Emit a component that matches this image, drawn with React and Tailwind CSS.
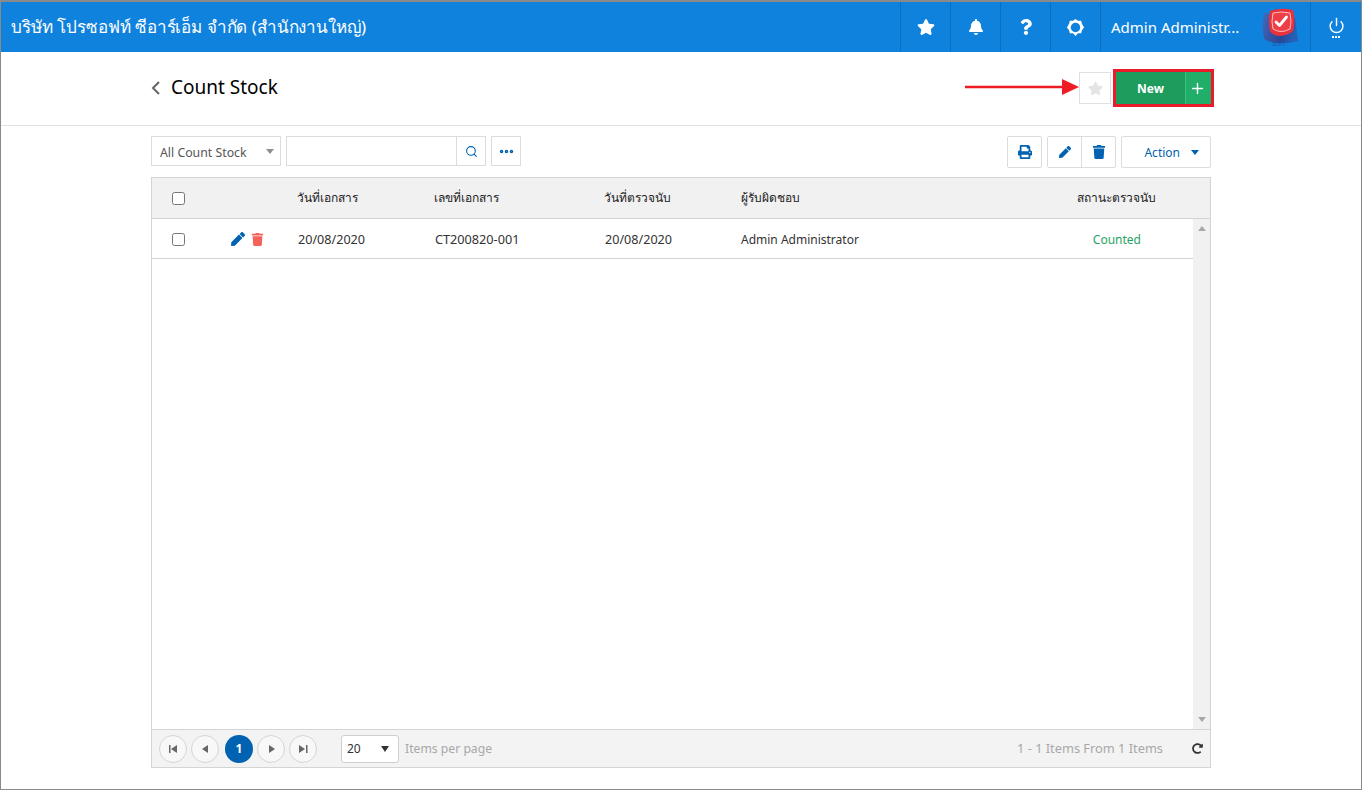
import React from 'react';
import { Search, MoreHorizontal, Plus, Power } from 'lucide-react';
import { FaStar, FaBell, FaQuestion, FaPrint, FaPen, FaTrash, FaRedoAlt } from 'react-icons/fa';

const sans = "font-['Noto_Sans','Liberation_Sans',sans-serif]";

function Gear() {
  return (
    <svg width="19" height="19" viewBox="0 0 20 20">
      <path d="M10 1l2.600 2 3.300-.1.9 3.200L19 10l-2.200 2.900-.9 3.200-3.300-.1L10 19l-2.600-3-3.300.1-.9-3.200L1 10l2.200-3.900.9-3.200 3.300.1z" fill="#fff" />
      <circle cx="10" cy="10" r="5" fill="#0f82de" />
    </svg>
  );
}

function Logo() {
  return (
    <svg width="38" height="40" viewBox="0 0 38 40">
      <defs>
        <linearGradient id="logoBlue" x1="0" y1="0" x2="1" y2="0.300">
          <stop offset="0" stopColor="#4468b8" />
          <stop offset="0.700" stopColor="#2a4796" />
          <stop offset="1" stopColor="#2560b4" />
        </linearGradient>
      </defs>
      <path d="M3 5 Q0 24 4 32 Q18 38 37 33 L34 10z" fill="url(#logoBlue)" />
      <path d="M9 3 Q20 -1 32 2 Q35 14 32 23 Q28 27 20 28 Q12 28 9 23 Q7 12 9 3z" fill="#e8323c" />
      <path d="M12 5 Q20 3 29 5 Q31 14 29 21 Q20 26 12 21 Q10 14 12 5z" fill="#ee3f46" stroke="#ffc0c2" strokeWidth="1" />
      <path d="M15 14l3.500 3.500 7-8.500" stroke="#fff" strokeWidth="2.800" fill="none" strokeLinecap="round" strokeLinejoin="round" />
      <text x="11" y="38" fontSize="5" fill="#24509e" fontFamily="Liberation Sans, sans-serif">SOFT</text>
    </svg>
  );
}

function TopIcon({ children }) {
  return <div className="w-[50px] h-full flex items-center justify-center border-l border-[#0b6fc0]">{children}</div>;
}

function PageBtn({ children }) {
  return <button className="w-7 h-7 rounded-full border border-[#d5d5d5] bg-[#f8f8f8] flex items-center justify-center">{children}</button>;
}

function Tri({ dir }) {
  return dir === 'left'
    ? <svg width="7" height="8" viewBox="0 0 7 8"><path d="M6 0v8L0 4z" fill="#666" /></svg>
    : <svg width="7" height="8" viewBox="0 0 7 8"><path d="M1 0v8l6-4z" fill="#666" /></svg>;
}

export default function App() {
  return (
    <div className={`w-[1362px] h-[790px] flex flex-col border border-t-2 border-[#8a8a8a] bg-white overflow-hidden ${sans}`}>
      {/* top bar */}
      <header className="h-[50px] bg-[#0f82de] flex items-center text-white shrink-0 -ml-px">
        <div className="flex-1 pl-[11px] text-[17px] tracking-[-0.08px]">บริษัท โปรซอฟท์ ซีอาร์เอ็ม จำกัด (สำนักงานใหญ่)</div>
        <TopIcon><FaStar size={18} /></TopIcon>
        <TopIcon><FaBell size={16} /></TopIcon>
        <TopIcon><FaQuestion size={16} /></TopIcon>
        <TopIcon><Gear /></TopIcon>
        <div className="w-[211px] h-full flex items-center border-l border-r border-[#0b6fc0] pl-[10px] relative">
          <span className="text-[15px] whitespace-nowrap">Admin Administr...</span>
          <div className="absolute left-[160px] top-[6px]"><Logo /></div>
        </div>
        <div className="w-[50px] h-full flex flex-col items-center justify-center">
          <Power size={17} strokeWidth={2} />
          <div className="w-2 border-t-2 border-dotted border-white mt-[2px]" />
        </div>
      </header>

      {/* title row */}
      <div className="h-[74px] pb-px border-b border-[#e2e2e2] shrink-0 flex items-center pl-[151px] pr-[147px] -ml-px">
        <svg width="9" height="14" viewBox="0 0 9 14">
          <path d="M8 1L2 7l6 6" stroke="#666" strokeWidth="2" fill="none" />
        </svg>
        <h1 className="ml-[11px] mb-px text-[19px] text-black">Count Stock</h1>
        <div className="flex-1" />
        <div className="relative flex items-center gap-[2px]">
          <svg className="absolute left-[-114px] top-[6px]" width="114" height="24" viewBox="0 0 114 24">
            <path d="M0 12h97" stroke="#ee1c25" strokeWidth="2.500" />
            <path d="M97 4l17 8-17 8z" fill="#ee1c25" />
          </svg>
          <button className="w-8 h-8 border border-[#e0e0e0] flex items-center justify-center">
            <FaStar size={15} className="text-[#e4e4e4]" />
          </button>
          <div className="flex w-[101px] h-[38px] border-[3px] border-[#e91c2b] bg-[#1fa463] text-white">
            <span className="flex-1 pt-px bg-[#1d9c5e] flex items-center justify-center text-xs font-bold">New</span>
            <span className="w-[26px] pr-[2px] border-l border-[#3fc07f] bg-[#20ae69] flex items-center justify-center"><Plus size={17} strokeWidth={2} /></span>
          </div>
        </div>
      </div>

      {/* toolbar */}
      <div className="w-[1060px] ml-[150px] mt-[10px] flex items-start h-[30px] shrink-0">
        <div className="w-[130px] h-full border border-[#dcdcdc] flex items-center justify-between pl-2 pr-[6px] text-[12.300px] text-[#555]">
          <span className="pt-[4px]">All Count Stock</span>
          <svg width="8" height="5" viewBox="0 0 8 5"><path d="M0 0h8L4 5z" fill="#8f8f8f" /></svg>
        </div>
        <div className="w-[200px] h-full border border-[#dcdcdc] ml-[5px] flex justify-end">
          <div className="w-[29px] border-l border-[#dcdcdc] flex items-center justify-center">
            <Search size={13} className="text-[#0062b1]" />
          </div>
        </div>
        <button className="w-[30px] h-full border border-[#dcdcdc] ml-[5px] flex items-center justify-center">
          <MoreHorizontal size={17} strokeWidth={3} className="text-[#0062b1]" />
        </button>
        <div className="flex-1" />
        <button className="w-[35px] h-[32px] border border-[#dcdcdc] rounded-[2px] flex items-center justify-center text-[#0062b1]"><FaPrint size={14} /></button>
        <div className="ml-[5px] flex h-[32px] border border-[#dcdcdc] rounded-[2px] text-[#0062b1]">
          <button className="w-[34px] flex items-center justify-center border-r border-[#dcdcdc]"><FaPen size={12} /></button>
          <button className="w-[33px] flex items-center justify-center"><FaTrash size={14} /></button>
        </div>
        <button className="ml-[5px] w-[90px] h-[32px] border border-[#dcdcdc] rounded-[2px] flex items-center justify-end pr-[11px] gap-[11px] text-xs text-[#0062b1]">
          <span className="pt-[2px]">Action</span>
          <svg width="8" height="5" viewBox="0 0 8 5"><path d="M0 0h8L4 5z" fill="#0062b1" /></svg>
        </button>
      </div>

      {/* grid */}
      <div className="w-[1060px] ml-[150px] mt-[11px] h-[591px] border border-[#d4d4d4] flex flex-col shrink-0">
        <div className="h-[41px] bg-[#f1f1f1] border-b border-[#d4d4d4] relative flex items-center text-xs text-[#222] shrink-0">
          <input type="checkbox" readOnly className="ml-5 w-[13px] h-[13px]" />
          <span className="ml-[112px] w-[137px]">วันที่เอกสาร</span>
          <span className="w-[170px]">เลขที่เอกสาร</span>
          <span className="w-[137px]">วันที่ตรวจนับ</span>
          <span className="flex-1">ผู้รับผิดชอบ</span>
          <span className="pr-[54px]">สถานะตรวจนับ</span>
        </div>
        <div className="flex-1 flex min-h-0">
          <div className="flex-1">
            <div className="h-[40px] border-b border-[#d4d4d4] flex items-center text-xs text-[#333]">
              <input type="checkbox" readOnly className="ml-5 mt-px w-[13px] h-[13px]" />
              <div className="ml-[46px] mt-px w-[67px] flex items-center gap-[6px]">
                <FaPen size={14} className="text-[#0062b1]" />
                <FaTrash size={13} className="text-[#f4635a]" />
              </div>
              <span className="w-[137px] pt-[3px] text-[12.600px]">20/08/2020</span>
              <span className="w-[170px] pt-px text-[12.700px]">CT200820-001</span>
              <span className="w-[136px] pt-[3px] text-[12.600px]">20/08/2020</span>
              <span className="flex-1 pt-[2px]">Admin Administrator</span>
              <span className="pr-[52px] pt-[2px] text-[#1fa463]">Counted</span>
            </div>
          </div>
          <div className="w-[17px] bg-[#f1f1f1] flex flex-col items-center justify-between py-[7px]">
            <svg width="8" height="5" viewBox="0 0 8 5"><path d="M0 5h8L4 0z" fill="#a8a8a8" /></svg>
            <svg width="8" height="5" viewBox="0 0 8 5"><path d="M0 0h8L4 5z" fill="#a8a8a8" /></svg>
          </div>
        </div>
        <div className="h-[38px] bg-[#f3f3f3] border-t border-[#d4d4d4] flex items-center pl-[7px] pr-[6px] shrink-0 text-xs">
          <div className="flex items-center gap-1">
            <PageBtn><svg width="9" height="8" viewBox="0 0 9 8"><path d="M0 0h1.500v8H0zM8 0v8L2 4z" fill="#666" /></svg></PageBtn>
            <PageBtn><Tri dir="left" /></PageBtn>
            <span className="w-7 h-7 ml-[2px] rounded-full bg-[#0062b1] text-white font-bold flex items-center justify-center">1</span>
            <PageBtn><Tri dir="right" /></PageBtn>
            <PageBtn><svg width="9" height="8" viewBox="0 0 9 8"><path d="M0 0v8l6-4zM7 0h1.500v8H7z" fill="#666" /></svg></PageBtn>
          </div>
          <div className="ml-6 w-[58px] h-7 rounded-[3px] border border-[#cfcfcf] bg-white flex items-center justify-between pl-[5px] pr-[9px] text-[#333]">
            <span>20</span>
            <svg width="8" height="6" viewBox="0 0 8 6"><path d="M0 0h8L4 6z" fill="#333" /></svg>
          </div>
          <span className="ml-[6px] pt-px text-[12.200px] text-[#a8a8a8]">Items per page</span>
          <div className="flex-1" />
          <span className="text-[12.800px] text-[#a8a8a8]">1 - 1 Items From 1 Items</span>
          <FaRedoAlt size={11} className="ml-[29px] mr-[1px] text-[#333]" />
        </div>
      </div>
    </div>
  );
}
